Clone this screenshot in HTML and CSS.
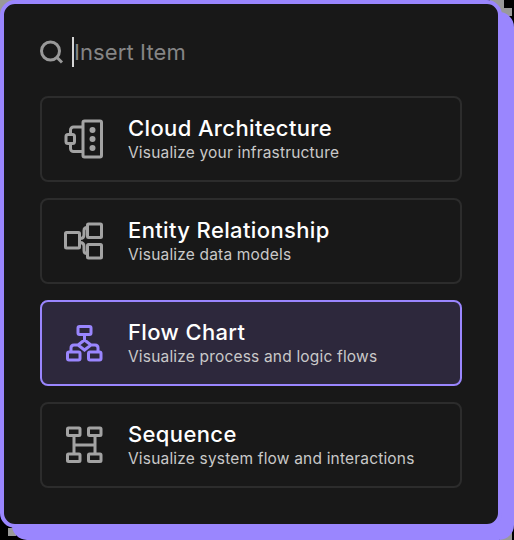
FILE: index.html
```html
<!DOCTYPE html>
<html lang="en">
<head>
<meta charset="utf-8">
<title>Insert Item</title>
<link rel="stylesheet" href="styles.css">
</head>
<body>
<main class="panel">
  <div class="search">
    <svg class="search-icon" width="26" height="26" viewBox="1 0 26 26"><circle cx="11.500" cy="12" r="9"/><path d="M18 18.500l5 5"/></svg>
    <span class="caret"></span>
    <span class="placeholder">Insert Item</span>
  </div>
  <ul class="list">
    <li class="card">
      <svg class="icon" width="40" height="40" viewBox="1 0 40 40"><rect x="20" y="2" width="18.500" height="36" rx="1.500"/><path d="M20 8H10.500a3 3 0 0 0-3 3V16M7.500 24v5.500a3 3 0 0 0 3 3H20"/><rect x="3" y="15.500" width="8.500" height="9" rx="2"/><g class="dots"><circle cx="29.500" cy="11" r="3"/><circle cx="29.500" cy="20" r="3"/><circle cx="29.500" cy="29" r="3"/></g></svg>
      <div class="text"><h2>Cloud Architecture</h2><p>Visualize your infrastructure</p></div>
    </li>
    <li class="card">
      <svg class="icon" width="40" height="40" viewBox="1 0 40 40"><rect x="2.500" y="11.500" width="14" height="15.500" rx="1"/><rect x="24.500" y="3" width="14" height="13.500" rx="1"/><rect x="24.500" y="23.500" width="14" height="13.500" rx="1"/><path d="M17 17.500q4 0 4-4V9.500q0-3 3-3M17 21.500q4 0 4 4v4q0 3 3 3"/></svg>
      <div class="text"><h2>Entity Relationship</h2><p>Visualize data models</p></div>
    </li>
    <li class="card selected">
      <svg class="icon" width="40" height="40" viewBox="1.500 0 40 40"><rect x="15.500" y="3.500" width="13" height="8" rx="1.500"/><path d="M22 11.500v5.500M22 17l6.500 5-6.500 5-6.500-5zM15.500 22h-4q-3 0-3 3V28.500M28.500 22h4q3 0 3 3V28.500"/><rect x="5" y="29" width="12.500" height="8" rx="1.500"/><rect x="26" y="29" width="12.500" height="8" rx="1.500"/></svg>
      <div class="text"><h2>Flow Chart</h2><p>Visualize process and logic flows</p></div>
    </li>
    <li class="card">
      <svg class="icon" width="40" height="40" viewBox="1 0 40 40"><rect x="4.500" y="3" width="12.500" height="7.500" rx="1"/><rect x="25.500" y="3" width="12.500" height="7.500" rx="1"/><rect x="4.500" y="29" width="12.500" height="7.500" rx="1"/><rect x="25.500" y="29" width="12.500" height="7.500" rx="1"/><path d="M11 10.500v18.500M32 10.500v18.500M11 20h21"/></svg>
      <div class="text"><h2>Sequence</h2><p>Visualize system flow and interactions</p></div>
    </li>
  </ul>
</main>
</body>
</html>
```
FILE: styles.css
```css
* { box-sizing: border-box; }

body {
  margin: 0;
  width: 514px;
  height: 540px;
  overflow: hidden;
  font-family: Inter, "Liberation Sans", sans-serif;
  background-color: #000;
  background-image:
    linear-gradient(#999, #999),
    linear-gradient(#999, #999),
    linear-gradient(#999, #999),
    linear-gradient(#999, #999),
    linear-gradient(#999, #999);
  background-repeat: no-repeat;
  background-position: 0 0, 490px 0, 504px 8px, 8px 528px, 500px 530px;
  background-size: 16px 16px, 14px 16px, 8px 8px, 8px 8px, 12px 10px;
}

.panel {
  width: 502px;
  height: 528px;
  padding: 32px 36px;
  border: 4px solid #9a86fe;
  border-radius: 15px;
  background: #181818;
  box-shadow: 12px 12px 0 #9a86fe;
}

.search {
  display: flex;
  align-items: center;
  height: 32px;
}

.search-icon {
  fill: none;
  stroke: #999;
  stroke-width: 3;
}

.caret {
  width: 2px;
  height: 30px;
  margin-left: 6px;
  background: #d5d5d5;
}

.placeholder {
  font-size: 22px;
  letter-spacing: 0.1px;
  color: #858585;
}

.list {
  display: flex;
  flex-direction: column;
  gap: 16px;
  margin: 28px 0 0;
  padding: 0;
  list-style: none;
}

.card {
  display: flex;
  align-items: center;
  gap: 24px;
  width: 422px;
  height: 86px;
  padding: 0 22px;
  border: 2px solid #2c2c2c;
  border-radius: 8px;
}

.icon {
  fill: none;
  stroke: #a3a3a3;
  stroke-width: 3;
}

.dots {
  fill: #a3a3a3;
  stroke: none;
}

.selected {
  border-color: #9a86fe;
  background: #2d283c;
}

.selected .icon { stroke: #9a86fe; }

h2 {
  margin: 0;
  font-size: 22px;
  font-weight: 550;
  line-height: 26px;
  letter-spacing: 0.37px;
  color: #fff;
}

p {
  margin: 1px 0 -1px;
  font-size: 15.5px;
  line-height: 22px;
  letter-spacing: 0.18px;
  color: #c9c9c9;
}
```
